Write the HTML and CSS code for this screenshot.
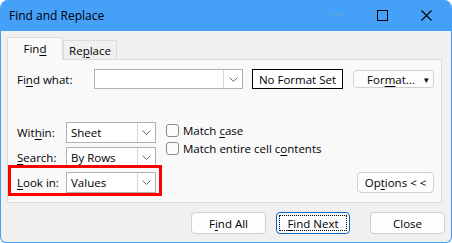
FILE: index.html
```html
<!DOCTYPE html>
<html lang="en">
<head>
  <meta charset="UTF-8">
  <title>Find and Replace</title>
  <link rel="stylesheet" href="styles.css">
</head>
<body>

  <div class="window">
    <div class="titlebar">
      <div class="title">Find and Replace</div>
      <div class="controls">
        <span class="ctl ctl-min"><span class="min-line"></span></span>
        <span class="ctl ctl-max"><span class="max-box"></span></span>
        <span class="ctl ctl-close">
          <svg width="11" height="11" viewBox="0 0 11 11"><path d="M0.5 0.5 L10.5 10.5 M10.5 0.5 L0.5 10.5" stroke="#000" stroke-width="1.1" fill="none"/></svg>
        </span>
      </div>
    </div>

    <div class="content">
      <div class="tabs">
        <div class="tab active"><span>Fin<u>d</u></span></div>
        <div class="tab"><span>Re<u>p</u>lace</span></div>
      </div>

      <div class="panel">
        <div class="row-find">
          <div class="label label-find"><span>Fi<u>n</u>d what:</span></div>
          <div class="combo combo-find">
            <div class="combo-text"></div>
            <div class="combo-arrow"><svg width="9" height="5" viewBox="0 0 9 5"><path d="M0.5 0.5 L4.5 4.5 L8.5 0.5" stroke="#6a6a6a" fill="none"/></svg></div>
          </div>
          <div class="format-set">No Format Set</div>
          <div class="btn btn-format"><span class="btn-text">For<u>m</u>at...</span><span class="caret">&#9662;</span></div>
        </div>

        <div class="lower">
          <div class="selects">
            <div class="sel-row">
              <div class="label label-sel"><span>Wit<u>h</u>in:</span></div>
              <div class="combo combo-sel">
                <div class="combo-text">Sheet</div>
                <div class="combo-arrow"><svg width="9" height="5" viewBox="0 0 9 5"><path d="M0.5 0.5 L4.5 4.5 L8.5 0.5" stroke="#6a6a6a" fill="none"/></svg></div>
              </div>
            </div>
            <div class="sel-row">
              <div class="label label-sel"><span><u>S</u>earch:</span></div>
              <div class="combo combo-sel">
                <div class="combo-text">By Rows</div>
                <div class="combo-arrow"><svg width="9" height="5" viewBox="0 0 9 5"><path d="M0.5 0.5 L4.5 4.5 L8.5 0.5" stroke="#6a6a6a" fill="none"/></svg></div>
              </div>
            </div>
            <div class="sel-row">
              <div class="label label-sel"><span><u>L</u>ook in:</span></div>
              <div class="combo combo-sel">
                <div class="combo-text">Values</div>
                <div class="combo-arrow"><svg width="9" height="5" viewBox="0 0 9 5"><path d="M0.5 0.5 L4.5 4.5 L8.5 0.5" stroke="#6a6a6a" fill="none"/></svg></div>
              </div>
            </div>
            <div class="highlight"></div>
          </div>

          <div class="checks">
            <div class="check"><span class="box"></span><span>Match <u>c</u>ase</span></div>
            <div class="check"><span class="box"></span><span>Match entire cell c<u>o</u>ntents</span></div>
          </div>

          <div class="btn btn-options"><span>Op<u>t</u>ions &lt; &lt;</span></div>
        </div>
      </div>

      <div class="actions">
        <div class="btn btn-action"><span>F<u>i</u>nd All</span></div>
        <div class="btn btn-action btn-default"><span class="focus"><span><u>F</u>ind Next</span></span></div>
        <div class="btn btn-action btn-close">Close</div>
      </div>
    </div>
  </div>

</body>
</html>
```

FILE: styles.css
```css
body {
  margin: 0;
  background: #ffffff;
  font-family: "Open Sans", "Noto Sans", sans-serif;
  font-size: 11.5px;
  color: #000;
}
u {
  text-decoration-thickness: 1px;
  text-underline-offset: 2px;
}
.window {
  width: 452px;
  height: 243px;
  box-sizing: border-box;
  background: #f0f0f0;
  border: 1px solid #45a0f8;
  border-top: none;
  border-radius: 8px 8px 6px 6px;
  overflow: hidden;
}
.titlebar {
  height: 31px;
  background: #45a0f8;
  display: flex;
  align-items: center;
  justify-content: space-between;
}
.title {
  font-size: 12px;
  padding-left: 8px;
  padding-bottom: 1px;
}
.controls {
  display: flex;
  height: 31px;
}
.ctl {
  width: 46px;
  display: flex;
  align-items: center;
  justify-content: center;
}
.min-line {
  width: 11px;
  height: 1px;
  background: #6c9fd2;
}
.max-box {
  width: 9px;
  height: 9px;
  border: 1px solid #000;
}
.ctl-close {
  width: 42px;
  padding-right: 4px;
}
.content {
  padding: 6px 0 0 6px;
}
.tabs {
  display: flex;
  align-items: flex-end;
  height: 22px;
}
.tab {
  height: 19px;
  box-sizing: border-box;
  padding: 0 10px;
  border: 1px solid #dcdcdc;
  border-bottom: none;
  background: #f0f0f0;
  display: flex;
  align-items: center;
  justify-content: center;
  width: 54px;
}
.tab.active {
  height: 23px;
  width: 56px;
  background: #f9f9f9;
  position: relative;
  top: 1px;
  z-index: 1;
  padding-bottom: 1px;
}
.panel {
  width: 435px;
  height: 144px;
  box-sizing: border-box;
  background: #f9f9f9;
  border: 1px solid #dcdcdc;
  padding: 9px 0 0 8px;
}
.row-find {
  display: flex;
  align-items: center;
}
.label {
  display: flex;
  align-items: center;
  padding-left: 1px;
}
.label-find {
  width: 77px;
}
.label-sel {
  width: 49px;
}
.combo {
  display: flex;
  box-sizing: border-box;
  background: #fff;
  border: 1px solid #b0b0b0;
}
.combo-text {
  flex: 1;
  display: flex;
  align-items: center;
  padding-left: 4px;
}
.combo-arrow {
  width: 17px;
  border-left: 1px solid #d6d6d6;
  display: flex;
  align-items: center;
  justify-content: center;
}
.combo-find {
  width: 149px;
  height: 20px;
}
.combo-find .combo-arrow {
  width: 18px;
}
.format-set {
  margin-left: 9px;
  width: 91px;
  height: 20px;
  box-sizing: border-box;
  border: 1px solid #000;
  background: #fff;
  display: flex;
  align-items: center;
  justify-content: center;
}
.btn {
  box-sizing: border-box;
  background: #fdfdfd;
  border: 1px solid #d0d0d0;
  border-radius: 4px;
  display: flex;
  align-items: center;
  justify-content: center;
}
.btn-format {
  margin-left: 10px;
  width: 81px;
  height: 18px;
  padding: 0 4px 0 0;
}
.btn-format .btn-text {
  flex: 1;
  text-align: center;
  padding-left: 4px;
}
.caret {
  font-size: 9px;
}
.lower {
  display: flex;
  margin-top: 33px;
}
.selects {
  display: flex;
  flex-direction: column;
  gap: 4px;
  position: relative;
}
.sel-row {
  display: flex;
}
.combo-sel {
  width: 90px;
  height: 21px;
}
.highlight {
  position: absolute;
  left: -8px;
  top: 43px;
  width: 154px;
  height: 31px;
  box-sizing: border-box;
  border: 3px solid #ff0000;
}
.checks {
  margin-left: 10px;
  padding-top: 2px;
  display: flex;
  flex-direction: column;
  gap: 5px;
}
.check {
  display: flex;
  align-items: center;
  height: 13px;
}
.box {
  width: 13px;
  height: 13px;
  box-sizing: border-box;
  border: 1px solid #8a8a8a;
  border-radius: 3px;
  background: #fcfcfc;
  margin-right: 4px;
}
.btn-options {
  margin-left: auto;
  margin-right: 7px;
  align-self: flex-end;
  width: 77px;
  height: 21px;
}
.actions {
  display: flex;
  justify-content: flex-end;
  margin-top: 9px;
  padding-right: 6px;
  gap: 10px;
}
.btn-action {
  width: 75px;
  height: 22px;
}
.btn-default {
  width: 74px;
  border-color: #0067c0;
  padding: 2px;
}
.focus {
  flex: 1;
  align-self: stretch;
  border: 1px dotted #000;
  display: flex;
  align-items: center;
  justify-content: center;
}
.btn-close {
  margin-left: 10px;
}
```
